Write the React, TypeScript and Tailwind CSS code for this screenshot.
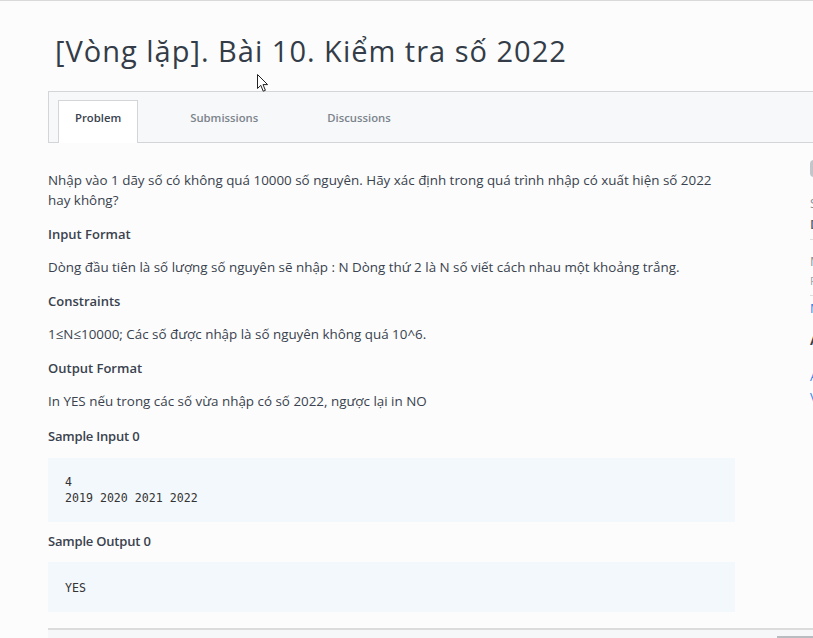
import React from 'react';

const tabs = [
  { label: 'Problem', active: true },
  { label: 'Submissions', active: false },
  { label: 'Discussions', active: false },
];

function Cursor() {
  return (
    <svg className="absolute left-[257px] top-[73px]" width="12" height="19" viewBox="0 0 12 19">
      <path
        d="M0.5 0.5 L0.5 14.5 L3.8 11.3 L6.2 17.2 L8.4 16.3 L6 10.6 L10.6 10.6 Z"
        fill="#ffffff"
        stroke="#222"
        strokeWidth="1"
        strokeLinejoin="round"
      />
    </svg>
  );
}

function Sidebar() {
  return (
    <div className="w-[220px] ml-[75px] pt-[17px] text-[13px] leading-[18px] shrink-0">
      <div className="h-[17px] w-[130px] bg-[#c2c5c9] rounded-sm" />
      <p className="mt-[17px] text-[#8a9097]">Submitted By 3512</p>
      <p className="mt-[3px] text-[#5b636c] font-semibold">Difficulty: Easy</p>
      <div className="mt-[6px] border-t border-[#dcdcdc]" />
      <p className="mt-[12px] text-[#8a9097]">Max Score: 10</p>
      <p className="mt-[2px] text-[#9aa0a6] text-[11px]">Rate This Challenge</p>
      <div className="mt-[5px] border-t border-[#dcdcdc]" />
      <p className="mt-[3px] text-[#3b7ddd]">More</p>
      <p className="mt-[14px] text-[#39424e] font-bold">Author</p>
      <p className="mt-[18px] text-[#3b7ddd]">Add to favourites</p>
      <p className="mt-[3px] text-[#3b7ddd]">View editorial</p>
    </div>
  );
}

export default function App() {
  return (
    <div
      className="relative w-[813px] h-[638px] overflow-hidden bg-[#fcfcfc] border-t border-[#d9d9d9] text-[#39424e]"
      style={{ fontFamily: '"Open Sans", "Noto Sans", sans-serif' }}
    >
      <div className="pl-[48px]">
        <h1 className="mt-[30px] pl-[7px] text-[29px] leading-[40px] tracking-[1px] font-normal text-[#333c47] whitespace-nowrap">
          [Vòng lặp]. Bài 10. Kiểm tra số 2022
        </h1>

        {/* thanh tab */}
        <div className="mt-[20px] w-[900px] h-[52px] bg-[#f7f8f9] border border-[#d3d5d8] flex items-end pl-[9px] gap-[35px]">
          {tabs.map((t) => (
            <div
              key={t.label}
              className={
                t.active
                  ? 'h-[43px] -mb-px px-[16px] pt-[8px] bg-white border border-b-0 border-[#d3d5d8] text-[11.3px] leading-[18px] font-semibold text-[#39424e]'
                  : 'h-[43px] -mb-px px-[16px] pt-[8px] border border-transparent text-[11.3px] leading-[18px] font-semibold text-[#7b848c]'
              }
            >
              {t.label}
            </div>
          ))}
        </div>

        <div className="flex">
          <div className="w-[687px] shrink-0 text-[13.4px] leading-[20px] text-[#39424e]">
            <p className="mt-[27px] pr-[20px]">
              Nhập vào 1 dãy số có không quá 10000 số nguyên. Hãy xác định trong quá trình nhập có xuất hiện số 2022 hay không?
            </p>
            <h3 className="mt-[14px] font-semibold text-[13px]">Input Format</h3>
            <p className="mt-[13px]">Dòng đầu tiên là số lượng số nguyên sẽ nhập : N Dòng thứ 2 là N số viết cách nhau một khoảng trắng.</p>
            <h3 className="mt-[14px] font-semibold text-[13px]">Constraints</h3>
            <p className="mt-[13px]">1≤N≤10000; Các số được nhập là số nguyên không quá 10^6.</p>
            <h3 className="mt-[14px] font-semibold text-[13px]">Output Format</h3>
            <p className="mt-[13px]">In YES nếu trong các số vừa nhập có số 2022, ngược lại in NO</p>
            <h3 className="mt-[15px] font-semibold text-[13px] tracking-[-0.2px]">Sample Input 0</h3>
            <pre
              className="mt-[12px] h-[64px] bg-[#f3f8fc] pl-[17px] pt-[16px] text-[11.6px] leading-[16px] text-[#333]"
              style={{ fontFamily: '"DejaVu Sans Mono", "Liberation Mono", monospace' }}
            >
              {'4\n2019 2020 2021 2022'}
            </pre>
            <h3 className="mt-[9px] font-semibold text-[13px] tracking-[-0.2px]">Sample Output 0</h3>
            <pre
              className="mt-[11px] h-[50px] bg-[#f3f8fc] pl-[17px] pt-[18px] text-[11.6px] leading-[16px] text-[#333]"
              style={{ fontFamily: '"DejaVu Sans Mono", "Liberation Mono", monospace' }}
            >
              YES
            </pre>
          </div>
          <Sidebar />
        </div>

        <div className="mt-[16px] h-[40px] w-[900px] bg-[#f6f7f8] border-t-2 border-[#dcdcdc] relative">
          <div className="absolute left-[729px] top-[6px] w-[80px] h-[30px] border-t-2 border-[#b9bcc0] bg-[#eceef0]" />
        </div>
      </div>
      <Cursor />
    </div>
  );
}
